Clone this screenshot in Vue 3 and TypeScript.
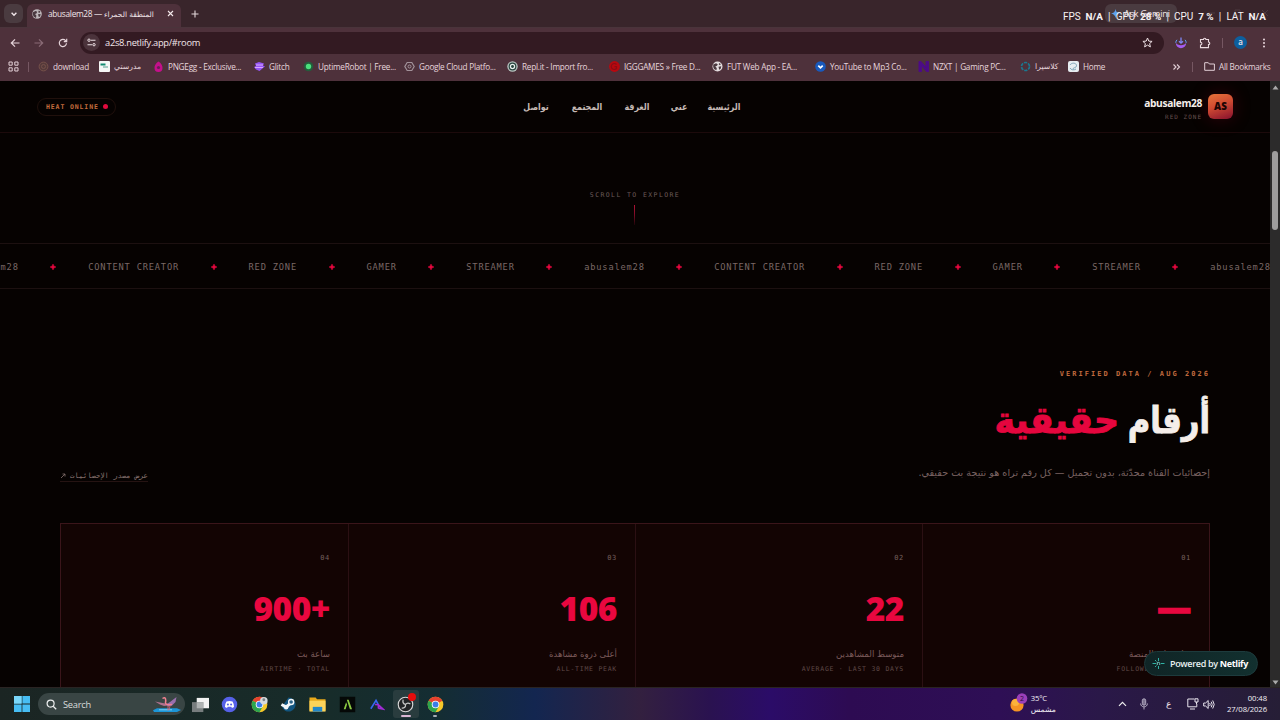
<script setup lang="ts">
interface Stat {
  index: string
  value: string
  label: string
  sub: string
}

const stats: Stat[] = [
  { index: '01', value: '—', label: 'متابع على المنصة', sub: 'FOLLOWERS · KICK' },
  { index: '02', value: '22', label: 'متوسط المشاهدين', sub: 'AVERAGE · LAST 30 DAYS' },
  { index: '03', value: '106', label: 'أعلى ذروة مشاهدة', sub: 'ALL-TIME PEAK' },
  { index: '04', value: '900+', label: 'ساعة بث', sub: 'AIRTIME · TOTAL' },
]

const words: string[] = ['abusalem28', 'CONTENT CREATOR', 'RED ZONE', 'GAMER', 'STREAMER']
const ticker: string[] = [...words, ...words, 'abusalem28']

const links: string[] = ['الرئيسية', 'عني', 'الغرفة', 'المجتمع', 'تواصل']
</script>

<template>
  <div class="screen">
    <div class="tabstrip">
      <div class="tabsearch">
        <svg width="8" height="8" viewBox="0 0 8 8"><path d="M1.6 2.8 4 5.2 6.4 2.8" fill="none" stroke="#f0e6e9" stroke-width="1.4" /></svg>
      </div>
      <div class="tab">
        <svg width="10" height="10" viewBox="0 0 10 10"><circle cx="5" cy="5" r="4.8" fill="#bdb6b9" /><path d="M1 3.2 3.6 2l1.600.8L4.400 4.400 3 5l1.400 1.400L4 9 1.600 7.400.6 5zM6.800 1.600 8.400 2.600l-1 1.400L6.200 3.200zM6 5.200l2.600-.2-.5 2.400L6.800 8z" fill="#4b3940" /></svg>
        <span class="tabtitle"><span>abusalem28 —</span> <span class="ar">المنطقة الحمراء</span></span>
        <svg class="close" width="7" height="7" viewBox="0 0 7 7"><path d="m1 1 5 5M6 1 1 6" stroke="#f3e8eb" stroke-width="1.1" /></svg>
      </div>
      <svg class="plus" width="8" height="8" viewBox="0 0 8 8"><path d="M4 .5v7M.5 4h7" stroke="#e3d7da" stroke-width="1.1" /></svg>
      <div class="gemini">
        <svg width="9" height="9" viewBox="0 0 9 9"><path d="M4.500 0Q5 4 9 4.500 5 5 4.500 9 4 5 0 4.500 4 4 4.500 0" fill="#5ea0ee" /></svg>
        <span>Ask Gemini</span>
      </div>
      <div class="winctl">
        <svg width="62" height="10" viewBox="0 0 62 10"><path d="M0 5h7M27 2h5v6h-5zM54 2l6 6M60 2l-6 6" fill="none" stroke="#4d3a40" /></svg>
      </div>
      <div class="perf">
        <span>FPS</span><b>N/A</b><i>|</i><span>GPU</span><b>28 %</b><i>|</i><span>CPU</span><b>7 %</b><i>|</i><span>LAT</span><b>N/A</b>
      </div>
    </div>

    <div class="toolbar">
      <svg width="10" height="10" viewBox="0 0 10 10"><path d="M9.500 5H1.500M5 1.300 1.300 5 5 8.700" fill="none" stroke="#e6d4da" stroke-width="1.200" /></svg>
      <svg width="10" height="10" viewBox="0 0 10 10"><path d="M.5 5h8M5 1.300 8.700 5 5 8.700" fill="none" stroke="#8a6b76" stroke-width="1.200" /></svg>
      <svg width="10" height="10" viewBox="0 0 10 10"><path d="M8.500 5.300A3.600 3.600 0 1 1 7.600 2.600L8.500 3.500M8.700.8v2.900H5.800" fill="none" stroke="#e6d4da" stroke-width="1.200" /></svg>
      <div class="omnibox">
        <span class="site"><svg width="9" height="9" viewBox="0 0 9 9"><path d="M4 2.200h4.500M.5 6.700H5" stroke="#ecdfe3" stroke-width="1.100" /><circle cx="2" cy="2.200" r="1.200" fill="none" stroke="#ecdfe3" /><circle cx="7" cy="6.700" r="1.200" fill="none" stroke="#ecdfe3" /></svg></span>
        <span class="url">a2s8.netlify.app/#room</span>
        <svg class="star" width="11" height="11" viewBox="0 0 11 11"><path d="m5.500 1 1.300 3.100 3.300.3-2.500 2.200.8 3.300-2.900-1.800-2.900 1.800.8-3.300L.9 4.400l3.300-.3z" fill="none" stroke="#efe2e6" /></svg>
      </div>
      <svg width="12" height="12" viewBox="0 0 12 12"><path d="M6 .5v5.500M4 4.200 6 6.200l2-2" fill="none" stroke="#7f86f4" stroke-width="1.300" /><path d="M.8 5.500c0 7.500 10.400 7.500 10.400 0-1.200 3.600-9.200 3.600-10.400 0" fill="#a45cf0" /><path d="M2 2.800Q.8 4 .8 5.800M10 2.800q1.200 1.200 1.200 3" fill="none" stroke="#5fa2f4" /></svg>
      <svg width="12" height="12" viewBox="0 0 12 12"><path d="M1.500 2.500h3a1.200 1.200 0 0 1 2.400 0h2.600V5a1.300 1.300 0 0 1 0 2.600v3h-8V8a1.400 1.400 0 0 0 0-2.800z" fill="none" stroke="#ead9de" stroke-width="1.100" /></svg>
      <span class="vsep"></span>
      <span class="avatar">a</span>
      <svg class="kebab" width="4" height="10" viewBox="0 0 4 10"><g fill="#ead9de"><circle cx="2" cy="1.500" r="1" /><circle cx="2" cy="5" r="1" /><circle cx="2" cy="8.500" r="1" /></g></svg>
    </div>

    <div class="bookmarks">
      <svg width="11" height="11" viewBox="0 0 11 11"><path d="M1 1h3.200v3.200H1zM6.800 1H10v3.200H6.800zM1 6.800h3.200V10H1zM6.800 6.800H10V10H6.800z" fill="none" stroke="#e2cfd6" /></svg>
      <span class="vsep"></span>
      <span class="bm"><svg viewBox="0 0 11 11"><circle cx="5.500" cy="5.500" r="4.400" fill="#553a3a" stroke="#75504a" /><circle cx="5.500" cy="5.500" r="2" fill="none" stroke="#75504a" /></svg>download</span>
      <span class="bm"><svg viewBox="0 0 11 11"><rect width="11" height="11" rx="1" fill="#f4f6f5" /><path d="M1.500 3.500h5" stroke="#128a70" stroke-width="2" /><path d="M4 6h5" stroke="#6dae9f" stroke-width="1.200" /></svg><span class="ar">مدرستي</span></span>
      <span class="bm"><svg viewBox="0 0 11 11"><path d="M5.500.5C8 2 9.700 4.500 9.500 7A4 4 0 0 1 1.500 7C1.300 4.500 3 2 5.500.5" fill="#c4108b" /><circle cx="5.500" cy="6.500" r="1.600" fill="#6b1d58" /></svg>PNGEgg - Exclusive...</span>
      <span class="bm"><svg viewBox="0 0 11 11"><path d="M1 2.500 5 1l5 1.500-1 2 2 1-2 1.500L5.500 10 2 8.500 0 6l2-1z" fill="#9556f5" /><path d="M2 4h7M1 6.500h8" stroke="#d9a4ff" /></svg>Glitch</span>
      <span class="bm"><svg viewBox="0 0 11 11"><circle cx="5.500" cy="5.500" r="4.800" fill="#245c3c" /><circle cx="5.500" cy="5.500" r="2.700" fill="#4be07c" /></svg>UptimeRobot | Free...</span>
      <span class="bm"><svg viewBox="0 0 11 11"><path d="M3.200 1.500h4.600l2.400 4-2.400 4H3.200l-2.400-4z" fill="none" stroke="#a2929a" stroke-width="1.200" /><circle cx="5.500" cy="5.500" r="1.500" fill="none" stroke="#a2929a" /></svg>Google Cloud Platfo...</span>
      <span class="bm"><svg viewBox="0 0 11 11"><circle cx="5.500" cy="5.500" r="5.200" fill="#b9c4c1" /><circle cx="5.500" cy="5.500" r="3.300" fill="#e8eeec" stroke="#28443e" stroke-width="1.200" /><circle cx="5.500" cy="5.500" r="1.400" fill="#24423b" /></svg>Repl.it - Import fro...</span>
      <span class="bm"><svg viewBox="0 0 11 11"><circle cx="5.500" cy="5.500" r="5.400" fill="#b8080f" /><path d="M7.500 3.500a3 3 0 1 0 0 4V5.700H5.500" fill="none" stroke="#8a0d14" stroke-width="1.200" /></svg>IGGGAMES » Free D...</span>
      <span class="bm"><svg viewBox="0 0 11 11"><circle cx="5.500" cy="5.500" r="5" fill="#e5dde0" /><path d="M1.200 3.500 4 2.200l1.800 1L5 4.800 3.300 5.500l1.500 1.600-.4 2.200L2 8 1.200 6zM7 2 8.800 3 8 4.200 6.800 3.400zM6.500 5.700l2.800-.4-.6 2.400-1.500 1.100z" fill="#4b3940" /></svg>FUT Web App - EA...</span>
      <span class="bm"><svg viewBox="0 0 11 11"><circle cx="5.500" cy="5.500" r="5.300" fill="#1859bd" /><path d="m3.300 4.700 2.200 2.200 2.200-2.200" fill="none" stroke="#fff" stroke-width="1.700" /></svg>YouTube to Mp3 Co...</span>
      <span class="bm"><svg viewBox="0 0 11 11"><path d="M1 10.500V.5h2l5 6v-6h2.500v10h-2l-5-6v6z" fill="#4c0b86" stroke="#4c0b86" /></svg>NZXT | Gaming PC...</span>
      <span class="bm"><svg viewBox="0 0 11 11"><circle cx="5.500" cy="5.500" r="4" fill="none" stroke="#1b7890" stroke-width="1.700" stroke-dasharray="3.200 1" /></svg><span class="ar">كلاسيرا</span></span>
      <span class="bm"><svg viewBox="0 0 11 11"><rect width="11" height="11" rx="2" fill="#e7edf1" /><path d="M2 4c2-3 7-2 6.500 1-.5 2.500-4 1-3.500 3.500M2 7c1 2 4 2.500 6 1" fill="none" stroke="#7fa5b8" /></svg>Home</span>
      <svg width="9" height="8" viewBox="0 0 9 8"><path d="m1.500 1.500 2.500 2.500-2.500 2.500M5 1.500 7.500 4 5 6.500" fill="none" stroke="#e2cfd6" stroke-width="1.100" /></svg>
      <span class="vsep"></span>
      <span class="bm folder"><svg viewBox="0 0 11 11"><path d="M.7 1.700h3.600l1.100 1.300h5v6.300H.7z" fill="none" stroke="#e2cfd6" /></svg>All Bookmarks</span>
    </div>

    <div class="view">
      <main class="page" dir="rtl">
        <header class="head">
          <div class="brand">
            <div class="logo">AS</div>
            <div class="brandtext" dir="ltr"><strong>abusalem28</strong><small>RED ZONE</small></div>
          </div>
          <nav class="nav"><a v-for="l in links" :key="l">{{ l }}</a></nav>
          <div class="heat" dir="ltr"><span>HEAT ONLINE</span><i></i></div>
        </header>

        <section class="explore" dir="ltr">
          <span>SCROLL TO EXPLORE</span>
          <i></i>
        </section>

        <section class="ticker" dir="ltr">
          <template v-for="(w, i) in ticker" :key="i">
            <span class="word">{{ w }}</span>
            <span class="spark"><svg width="6" height="6" viewBox="0 0 6 6"><path d="M3 0Q3.400 2.600 6 3 3.400 3.400 3 6 2.600 3.400 0 3 2.600 2.600 3 0" fill="#e3093f" stroke="#e3093f" stroke-width=".5" /></svg></span>
          </template>
        </section>

        <section class="intro">
          <div class="eyebrow" dir="ltr">VERIFIED DATA / AUG 2026</div>
          <h1><span>أرقام</span><em>حقيقية</em></h1>
          <div class="introrow">
            <p>إحصائيات القناة محدّثة، بدون تجميل — كل رقم تراه هو نتيجة بث حقيقي.</p>
            <a class="source"><span>عرض مصدر الإحصائيات</span><svg width="6" height="6" viewBox="0 0 6 6"><path d="m1 5 4-4M2.500 1H5v2.500" fill="none" stroke="#87726f" stroke-width=".8" /></svg></a>
          </div>
        </section>

        <section class="cards">
          <article v-for="s in stats" :key="s.index">
            <div class="idx" dir="ltr">{{ s.index }}</div>
            <div class="num" :class="{ dash: s.value === '—' }" dir="ltr">{{ s.value }}</div>
            <div class="label">{{ s.label }}</div>
            <div class="sub" dir="ltr">{{ s.sub }}</div>
          </article>
        </section>
      </main>
      <div class="scroll">
        <svg width="7" height="5" viewBox="0 0 7 5"><path d="M3.500.5 6.500 4.500H.5z" fill="#aaa" /></svg>
        <span class="thumb"></span>
        <svg width="7" height="5" viewBox="0 0 7 5"><path d="M3.500 4.500.5.5h6z" fill="#aaa" /></svg>
      </div>
      <div class="netlify">
        <svg width="13" height="13" viewBox="0 0 13 13"><path d="M.5 6.500h3.700M8.800 6.500h3.700M6.500 1v3M6.500 9v3M3 3l1.500 1.500M3 10l1.500-1.500" stroke="#2fb3a4" stroke-width="1" /><path d="M5.300 8V5.400h1.500q.9 0 .9.900V8" fill="none" stroke="#7fd0c8" stroke-width=".9" /></svg>
        <span>Powered by <b>Netlify</b></span>
      </div>
    </div>

    <div class="taskbar">
      <svg class="win" width="16" height="16" viewBox="0 0 16 16"><path d="M0 0h7.600v7.600H0zM8.400 0H16v7.600H8.400zM0 8.400h7.600V16H0zM8.400 8.400H16V16H8.400z" fill="#47bdf3" /><path d="M0 0h7.600v7.600H0z" fill="#7ad7fa" /></svg>
      <div class="search">
        <svg width="11" height="11" viewBox="0 0 11 11"><circle cx="4.600" cy="4.600" r="3.500" fill="none" stroke="#eceeee" stroke-width="1.200" /><path d="m7.200 7.200 3 3" stroke="#eceeee" stroke-width="1.300" /></svg>
        <span>Search</span>
        <svg class="bird" width="28" height="17" viewBox="0 0 28 17"><path d="M4 12.200H24L28 14 24 16H1L0 14.200z" fill="#1c96d8" /><path d="M6 13.800h13" stroke="#7fd0f4" stroke-width="1" /><path d="M2 5.500 12 7.500 15 9.500 11 10 7 8.500z" fill="#b0708f" /><path d="M13 8.500 17 6 23.500 1 22.500 6 19 9.500 15 10.500z" fill="#9a6fae" /><path d="M9.500 2.500Q12 .8 12.500 2.800T12.500 6.500 15.500 8.800L19 8.500" fill="none" stroke="#f0808f" stroke-width="1.500" /><path d="M15 10v4.500M17 10l-1 4" stroke="#e0606f" stroke-width=".8" /></svg>
      </div>
      <div class="apps">
        <svg viewBox="0 0 18 18"><path d="M5 2h13v11H5z" fill="#f2f2f2" /><path d="M0 6.500h12V17H0z" fill="#777d7e" /><path d="M5 6.500h7V13H5z" fill="#aeb2b2" /></svg>
        <svg viewBox="0 0 18 18"><circle cx="9" cy="9" r="8.200" fill="#5661e8" /><path d="M5.800 5.800Q9 4.600 12.200 5.800 14 8.600 13.800 11.600L11.600 12.700 10.900 11.500H7.100L6.400 12.700 4.200 11.600Q4 8.600 5.800 5.800" fill="#fff" /><circle cx="7.300" cy="9" r="1.100" fill="#5661e8" /><circle cx="10.700" cy="9" r="1.100" fill="#5661e8" /></svg>
        <svg viewBox="0 0 18 18"><circle cx="9" cy="9" r="8.300" fill="#f7c829" /><path d="M1.800 4.900A8.300 8.300 0 0 1 16.200 4.900L9 9z" fill="#e5412f" /><path d="M1.800 4.900A8.300 8.300 0 0 0 9 17.300L12.500 11z" fill="#2da44e" /><circle cx="9" cy="9" r="4" fill="#fff" /><circle cx="9" cy="9" r="3.100" fill="#3b7de8" /><circle cx="13.600" cy="5" r="4" fill="#d6dadd" /><circle cx="13.600" cy="4" r="1.500" fill="#7d8387" /></svg>
        <svg viewBox="0 0 18 18"><path d="M9 1.500a7.500 7.500 0 1 1-7 10z" fill="#12557f" /><path d="M1.500 9 6.500 11.500 11.500 7.500" fill="none" stroke="#f2f6f8" stroke-width="3.200" /><circle cx="11.800" cy="6.300" r="3.400" fill="#f2f6f8" /><circle cx="11.800" cy="6.300" r="1.900" fill="#2b6388" /><circle cx="6.500" cy="11.800" r="2.400" fill="#f2f6f8" /></svg>
        <svg viewBox="0 0 18 18"><path d="M.5 1.500h6.500l1.500 2H17.500v12H.5z" fill="#e9a91b" /><path d="M.5 5h17V16.500H.5z" fill="#fcd35a" /><path d="M4 11.500h10v5H4z" fill="#2387c9" /></svg>
        <svg viewBox="0 0 18 18"><rect x=".8" y=".8" width="16.400" height="16.400" fill="#050807" /><path d="M5 14 7.500 6.500 8.500 9 7 14zM8.300 4h1.900l3.600 10h-2.200z" fill="#8cca42" /></svg>
        <svg viewBox="0 0 18 18"><path d="m3 13.500 5.500-9 2.300 4.300" fill="none" stroke="#3568ef" stroke-width="1.700" /><path d="m7.500 9 3.500.3 5 4.500-5-1M11 9.300v4" fill="none" stroke="#a12bd5" stroke-width="1.700" /></svg>
        <span class="obs"><svg viewBox="0 0 18 18"><circle cx="9" cy="9" r="7.700" fill="#222426" stroke="#d8d8d8" stroke-width="1.200" /><path d="M6.500 3.800Q5.500 8 9 9M14.200 8.500Q11 6.500 9 9M5 12.800Q9.500 13 9 9" fill="none" stroke="#c8c8c8" stroke-width="1.300" /></svg><i></i></span>
        <span class="chrome"><svg viewBox="0 0 18 18"><circle cx="9" cy="9" r="8.300" fill="#f7c829" /><path d="M1.800 4.900A8.300 8.300 0 0 1 16.200 4.900L9 9z" fill="#e5412f" /><path d="M1.800 4.900A8.300 8.300 0 0 0 9 17.300L12.500 11z" fill="#2da44e" /><circle cx="9" cy="9" r="4" fill="#fff" /><circle cx="9" cy="9" r="3.100" fill="#3b7de8" /></svg></span>
      </div>
      <div class="weather">
        <svg width="18" height="19" viewBox="0 0 18 19"><circle cx="7" cy="12" r="6.600" fill="#f59324" /><circle cx="5.500" cy="9.500" r="3.500" fill="#fbb23c" /><circle cx="12" cy="5.500" r="5.300" fill="#9b3fb9" /><text x="12" y="8.200" text-anchor="middle">2</text></svg>
        <div><span>35°C</span><span class="ar">مشمس</span></div>
      </div>
      <div class="tray">
        <svg width="9" height="6" viewBox="0 0 9 6"><path d="m1 4.800 3.500-3.500L8 4.800" fill="none" stroke="#eee" stroke-width="1.200" /></svg>
        <svg width="8" height="12" viewBox="0 0 8 12"><rect x="2.300" y=".8" width="3.400" height="6.400" rx="1.700" fill="#7d7391" stroke="#b0a8bf" /><path d="M.6 5.500c0 4.500 6.800 4.500 6.800 0M4 9v2.500" fill="none" stroke="#b0a8bf" /></svg>
        <span class="lang">ع</span>
        <svg width="12" height="12" viewBox="0 0 12 12"><path d="M7.500 1H.8v7.800h9V6M3 11h5M8 .8h3v3.200H8zM9.500 4v2" fill="none" stroke="#e8e4ee" /></svg>
        <svg width="12" height="11" viewBox="0 0 12 11"><path d="M.7 4h1.900L5.200 1.500v8L2.600 7H.7zM6.700 4q1 1.500 0 3M8.200 2.700q2 2.800 0 5.600M9.700 1.500q3 4 0 8" fill="none" stroke="#e8e4ee" /></svg>
      </div>
      <div class="clock"><span>00:48</span><span>27/08/2026</span></div>
    </div>
  </div>
</template>

<style>
html, body { margin: 0; background: #060201; overflow: hidden; }
</style>

<style scoped>
* { box-sizing: border-box; }
svg { display: block; flex: none; }
.screen { position: relative; width: 1280px; height: 720px; overflow: hidden; display: flex; flex-direction: column; background: #060201; font-family: "Open Sans", "DejaVu Sans", sans-serif; color: #f0e4e8; }
.ar { font-family: "DejaVu Sans", sans-serif; direction: rtl; unicode-bidi: isolate; }

.tabstrip { position: relative; height: 27px; flex: none; display: flex; align-items: center; padding-left: 4px; background: #39252b; }
.tabsearch { width: 19px; height: 19px; border-radius: 6px; background: #4a3b40; display: flex; align-items: center; justify-content: center; }
.tab { align-self: flex-end; margin-left: 4px; width: 154px; height: 23px; border-radius: 6px 6px 0 0; background: #4e313b; display: flex; align-items: center; padding: 0 7px 4px 5px; font-size: 8.300px; }
.tabtitle { margin-left: 6px; width: 110px; white-space: nowrap; letter-spacing: -.300px; }
.tabtitle .ar { font-size: 7.400px; letter-spacing: 0; }
.close { margin-left: auto; }
.plus { margin-left: 10px; }
.gemini { position: absolute; left: 1105px; top: 4px; width: 72px; height: 19px; border-radius: 6px; background: #4a3b40; display: flex; align-items: center; gap: 4px; padding-left: 6px; font-size: 9px; letter-spacing: -.120px; white-space: nowrap; }
.winctl { position: absolute; left: 1208px; top: 8px; }
.perf { position: absolute; left: 1063px; top: 9px; height: 14px; display: flex; align-items: center; font-family: Roboto, sans-serif; font-size: 10px; color: #f7f2f3; white-space: nowrap; }
.perf b { margin-left: 4.800px; font-weight: 700; font-size: 9.900px; }
.perf i { font-style: normal; margin: 0 5.200px; }

.toolbar { height: 30px; flex: none; background: #4e313b; display: grid; grid-template-columns: 24px 24px 22px 1095px 24px 17px 18px 26px 4px; align-items: center; justify-items: start; padding-left: 10px; border-top: 1px solid #4a343b; }
.kebab { margin-left: 2px; }
.omnibox { width: 1084px; height: 22px; border-radius: 11px; background: #331a22; display: flex; align-items: center; padding: 0 11px 0 3px; }
.site { width: 17px; height: 17px; border-radius: 50%; background: #4b333b; display: flex; align-items: center; justify-content: center; }
.url { margin-left: 5px; font-size: 9.300px; letter-spacing: -.290px; color: #f3e6ea; }
.star { margin-left: auto; }
.vsep { width: 1px; height: 10px; background: #765762; }
.toolbar .vsep { margin-left: 6px; }
.avatar { width: 13px; height: 13px; border-radius: 50%; background: #0d5f9e; font-size: 8px; font-weight: 600; line-height: 12px; text-align: center; }

.bookmarks { height: 24px; flex: none; background: #4e313b; display: grid; grid-template-columns: 20px 10px 61px 54px 101px 49px 101px 103px 102px 103px 103px 103px 102px 48px 104px 20px 12px 70px; align-items: center; padding: 0 0 5px 8px; font-size: 8.200px; letter-spacing: -.240px; color: #e6d5db; }
.bm { display: flex; align-items: center; white-space: nowrap; }
.bm > svg { width: 11px; height: 11px; margin-right: 4px; }
.bm .ar { font-size: 7.700px; letter-spacing: 0; }

.view { position: relative; flex: 1; min-height: 0; display: flex; border-bottom: 1px solid #2a2423; }
.page { width: 1270px; height: 100%; overflow: hidden; background: #060201; font-family: "DejaVu Sans", sans-serif; }
.scroll { width: 10px; background: #2c2b2b; display: flex; flex-direction: column; align-items: center; padding: 4px 0 2px; }
.thumb { width: 6px; height: 79px; border-radius: 3px; background: #9e9d9d; margin: 61px 0 auto; }

.head { height: 52px; border-bottom: 1px solid #1c0a0b; display: grid; grid-template-columns: 494px 216px 486px; align-items: center; padding: 0 37px; }
.brand { display: flex; align-items: center; gap: 6px; }
.logo { width: 25px; height: 25px; border-radius: 6px; background: linear-gradient(160deg, #e8743a, #cf4a32 45%, #86102e); color: #1c0503; font: 800 9.800px/26px "Open Sans", sans-serif; text-align: center; box-shadow: 0 0 18px rgba(180, 10, 40, .25); }
.brandtext { display: flex; flex-direction: column; align-items: flex-end; padding-top: 5px; }
.brandtext strong { font: 700 10.200px/13px "Open Sans", sans-serif; letter-spacing: -.350px; color: #f5eeea; }
.brandtext small { margin-top: 3px; font: 6px/8px "DejaVu Sans Mono", monospace; letter-spacing: 1px; color: #66504e; }
.nav { display: grid; grid-template-columns: 31px 16px 25px 33px 26px; justify-content: space-between; justify-items: center; font-size: 9.200px; font-weight: 700; color: #c6bab5; white-space: nowrap; }
.nav a { display: flex; justify-content: center; width: 0; transform: scaleX(.86); }
.heat { justify-self: end; width: 79px; height: 18px; border: 1px solid #20100c; border-radius: 9px; display: flex; align-items: center; padding-left: 8px; font: 700 6.500px/10px "DejaVu Sans Mono", monospace; letter-spacing: .880px; color: #c56d3d; white-space: nowrap; }
.heat i { width: 5px; height: 5px; border-radius: 50%; background: #e00a3d; margin-left: 4px; }

.explore { height: 110px; padding-top: 57px; display: flex; flex-direction: column; align-items: center; font: 6.500px/10px "DejaVu Sans Mono", monospace; letter-spacing: 1.400px; color: #6c5b59; }
.explore i { width: 1px; height: 20px; margin-top: 5px; margin-right: 1px; background: linear-gradient(#b01236, #7a0c26 50%, #1c0508); }

.ticker { height: 46px; border: solid #1c1010; border-width: 1px 0; display: flex; align-items: center; padding-top: 1px; overflow: hidden; white-space: nowrap; font: 8.700px/12px "DejaVu Sans Mono", monospace; letter-spacing: .820px; color: #7a6866; }
.ticker .word:first-child { margin-left: -41.800px; }
.word, .spark { flex: none; }
.spark { margin: 0 31.900px 0 31.650px; }

.intro { height: 234px; padding: 80px 60px 0; }
.eyebrow { text-align: right; font: 700 7px/11px "DejaVu Sans Mono", monospace; letter-spacing: 2.050px; color: #c16a3e; }
h1 { margin: 11px 0 0; height: 60px; display: flex; gap: 9px; font-size: 37px; line-height: 60px; font-weight: 700; color: #f5eeea; -webkit-text-stroke: .9px; white-space: nowrap; }
h1 span { width: 82px; transform: scaleX(.83); transform-origin: right; }
h1 em { width: 124px; transform: scaleX(.94); transform-origin: right; font-style: normal; color: #e5063e; }
.introrow { display: flex; justify-content: space-between; align-items: flex-start; margin-top: 14px; }
.introrow p { margin: 0; font-size: 9.640px; line-height: 16px; color: #7a6262; white-space: nowrap; }
.source { margin-top: 6px; height: 11px; display: flex; gap: 4px; align-items: center; border-bottom: 1px solid #251312; font: 7.200px/10px "DejaVu Sans Mono", monospace; color: #87726f; white-space: nowrap; }

.cards { margin: 0 60px; width: 1150px; height: 230px; border: 1px solid #3a151a; display: grid; grid-template-columns: repeat(4, 1fr); background: #130403; }
.cards article { border-left: 1px solid #2b1013; padding: 28px 18px 0; display: flex; flex-direction: column; }
.cards article:last-child { border-left: 0; }
.idx { text-align: right; font: 7px/12px "DejaVu Sans Mono", monospace; letter-spacing: .700px; color: #735f5c; }
.num { text-align: right; margin-top: 24px; height: 40px; font: 800 33.500px/40px "Open Sans", sans-serif; letter-spacing: -.500px; color: #e9073f; }
.dash { -webkit-text-stroke: 1.500px; line-height: 38px; letter-spacing: 0; }
.label { margin-top: 18px; font-size: 8.600px; line-height: 16px; color: #7c5b5b; white-space: nowrap; }
.sub { text-align: right; margin-top: 1px; font: 6.500px/12px "DejaVu Sans Mono", monospace; letter-spacing: .740px; color: #5f4947; white-space: nowrap; }

.netlify { position: absolute; left: 1144px; top: 570px; width: 114px; height: 25px; border-radius: 13px; background: linear-gradient(90deg, #102526, #12302f); border: 1px solid #1d3b3d; display: flex; align-items: center; gap: 5px; padding-left: 7px; font-size: 9px; font-weight: 600; color: #e9f1f1; white-space: nowrap; letter-spacing: -.330px; }
.netlify b { font-weight: 700; color: #fff; }

.taskbar { position: relative; height: 32px; flex: none; display: flex; align-items: center; padding-left: 14px; background: linear-gradient(90deg, #1b2523 0, #172c2a 330px, #142d33 440px, #132650 535px, #33203f 640px, #2a1250 710px, #2b0c68 770px, #2d0b52 850px, #2e0f55 1000px, #2a1848 1100px, #261e36 1280px); }
.search { margin-left: 8px; width: 147px; height: 22px; border-radius: 11px; background: #394544; display: flex; align-items: center; padding: 0 4px 0 8px; font-size: 9.300px; letter-spacing: -.250px; color: #d8dcdc; }
.search span { margin-left: 6px; }
.bird { margin-left: auto; }
.apps { display: grid; grid-template-columns: repeat(9, 29.300px); margin-left: 1px; justify-items: center; align-items: center; }
.apps svg { width: 17px; height: 17px; }
.obs, .chrome { position: relative; width: 26px; height: 28px; border-radius: 3px; display: flex; align-items: center; justify-content: center; }
.obs { background: #293c3e; }
.obs::after { content: ""; position: absolute; left: 8px; bottom: 1px; width: 10px; height: 2px; border-radius: 1px; background: #d8b7d5; }
.chrome::after { content: ""; position: absolute; left: 11px; bottom: 1px; width: 4px; height: 2px; border-radius: 1px; background: #a7adb5; }
.obs i { position: absolute; right: 3px; top: 3px; width: 8px; height: 8px; border-radius: 50%; background: #e60c0c; }
.weather { margin-left: 560px; display: flex; gap: 3px; }
.weather text { font: 7px "Open Sans", sans-serif; fill: #2c0b3b; }
.weather div, .clock { display: flex; flex-direction: column; font-size: 7.700px; line-height: 11px; letter-spacing: -.150px; color: #f2eff5; }
.weather .ar { letter-spacing: 0; }
.tray { margin-left: auto; display: grid; grid-template-columns: 22px 26px 21px 16px 12px; align-items: center; font-size: 9px; }
.lang { font-family: "DejaVu Sans", sans-serif; }
.clock { width: 44px; margin: 0 13px 0 8px; align-items: flex-end; letter-spacing: -.080px; }
</style>
